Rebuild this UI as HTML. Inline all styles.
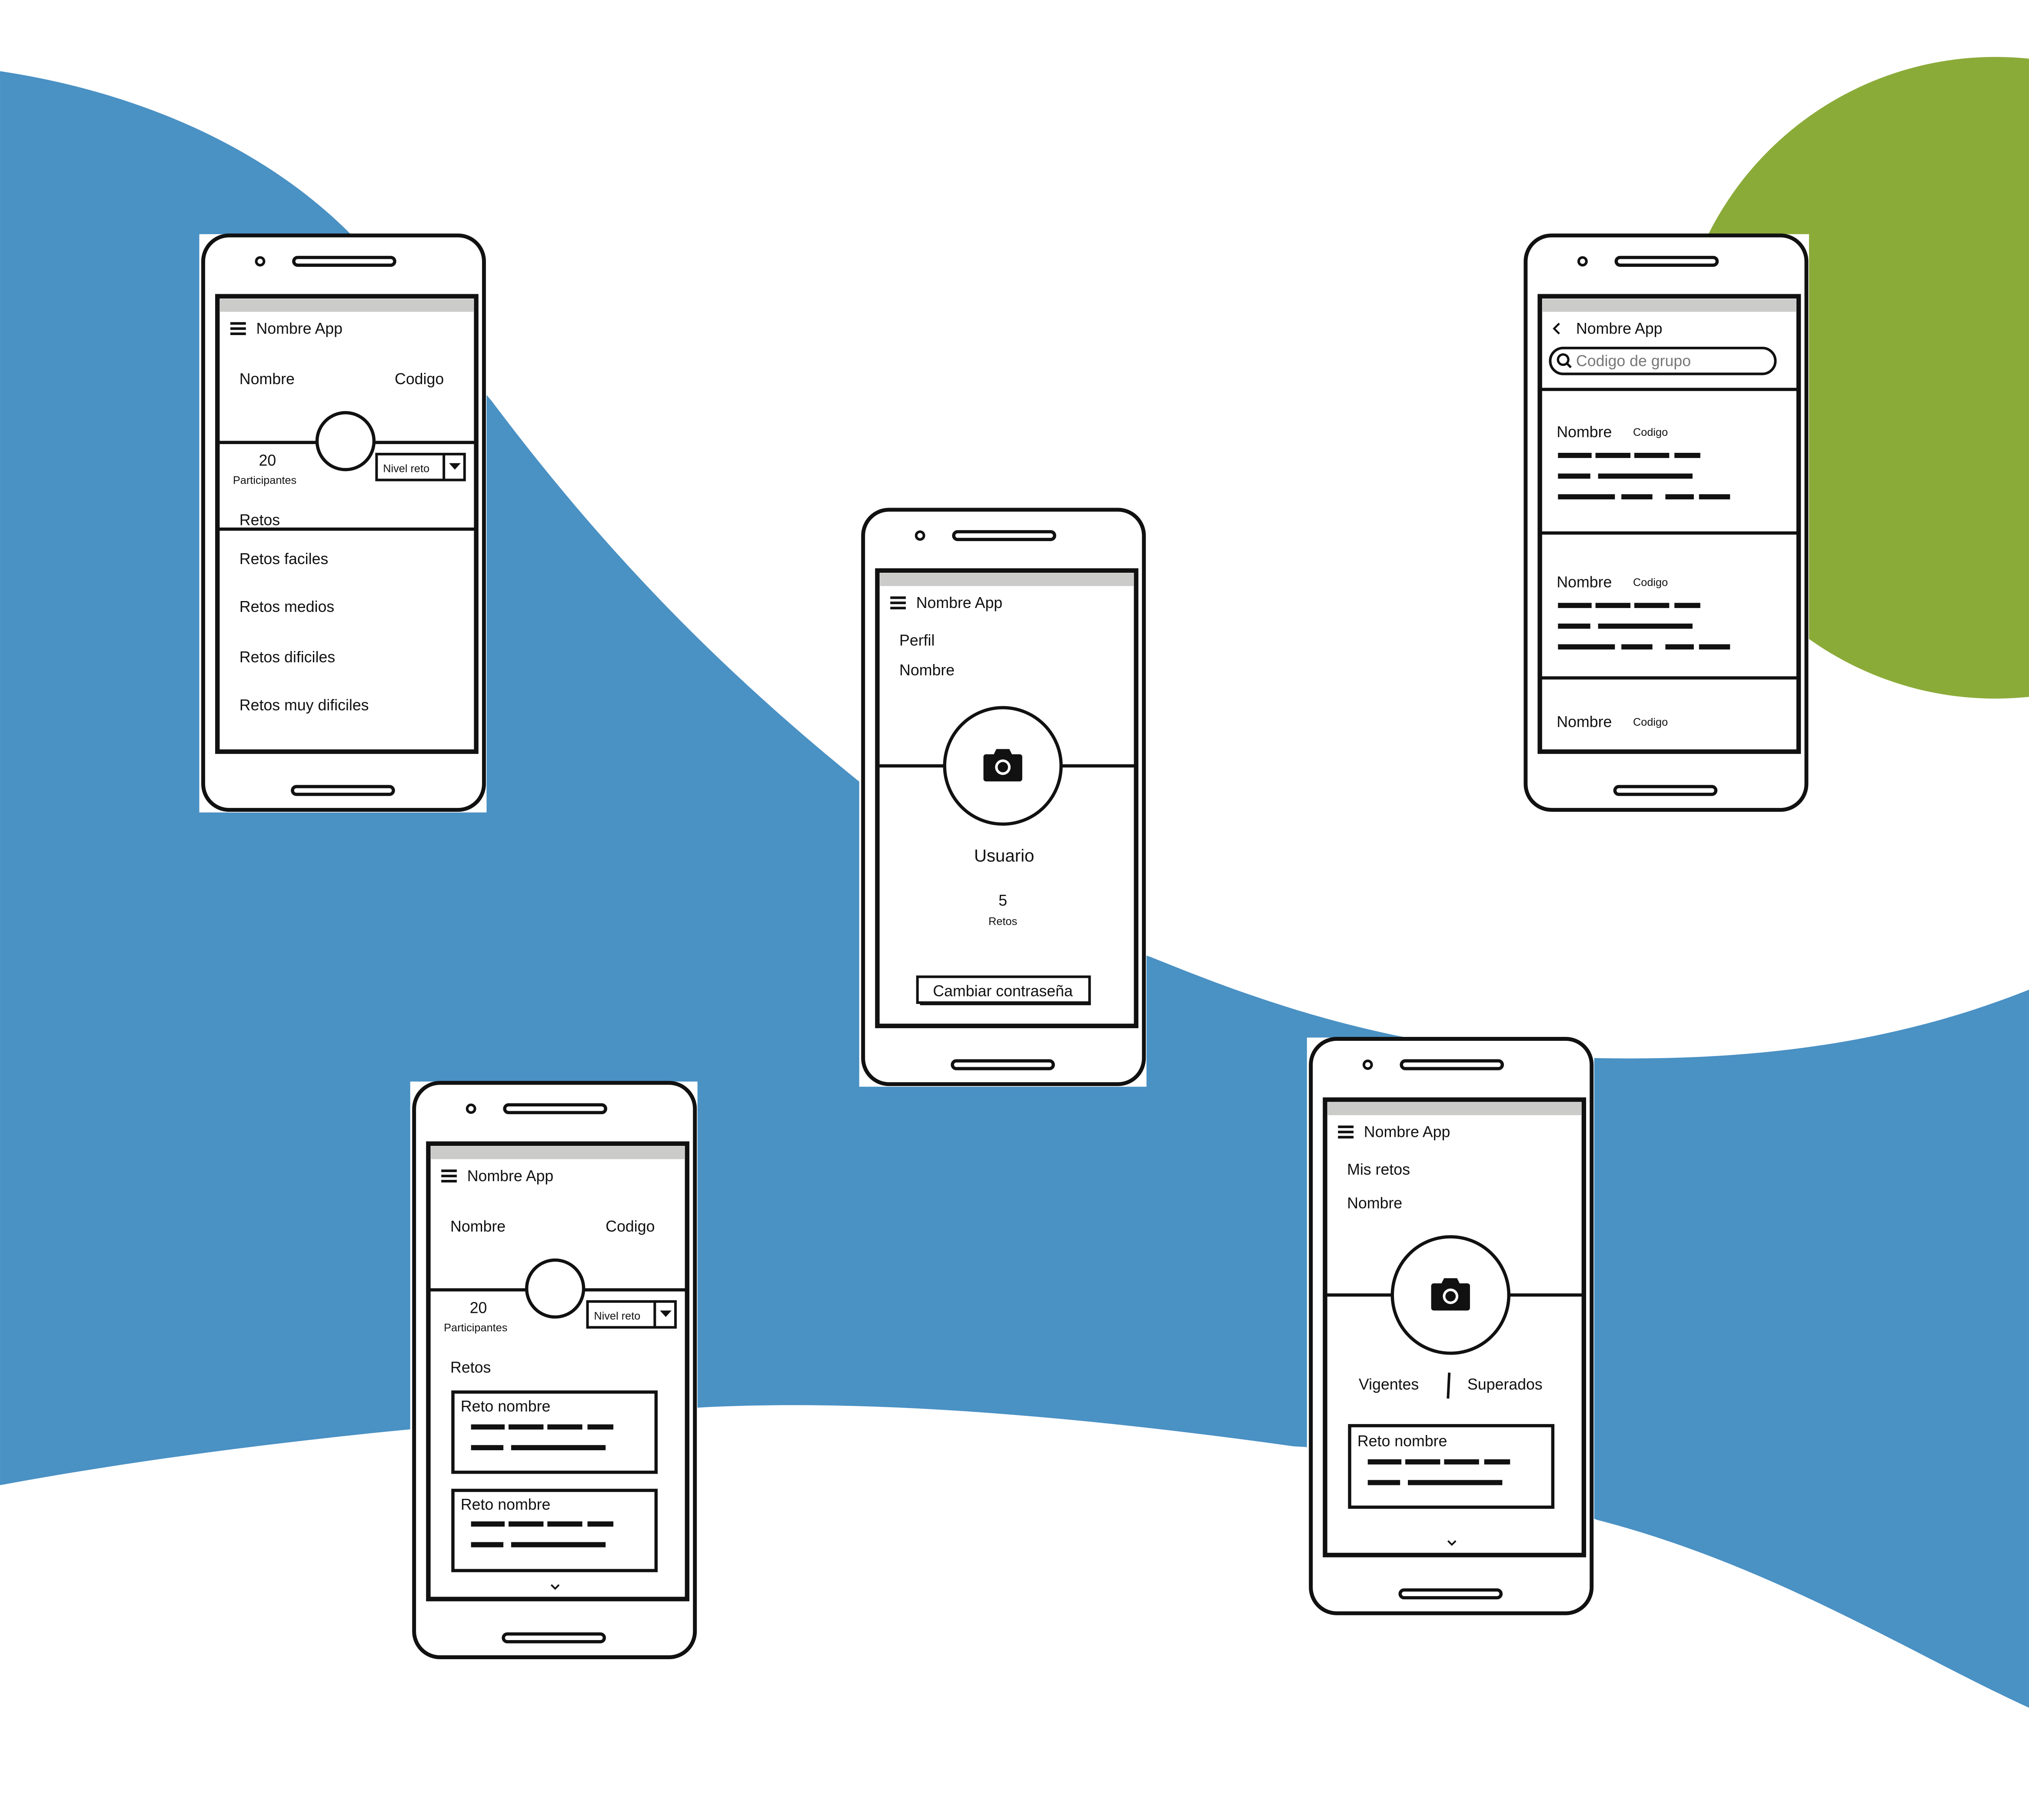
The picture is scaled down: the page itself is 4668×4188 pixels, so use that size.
<!DOCTYPE html>
<html><head><meta charset="utf-8"><style>
html,body{margin:0;padding:0;background:#fff;}
svg{display:block;}
text{font-family:"Liberation Sans",sans-serif;fill:#111;}
</style></head><body>
<svg width="4668" height="4188" viewBox="0 0 1568 1406.8" xmlns="http://www.w3.org/2000/svg">
<defs>
<g id="frame">
  <rect x="0" y="0" width="222" height="447" fill="#fff"/>
  <rect x="3" y="1" width="217" height="444" rx="20" fill="#fff" stroke="#111" stroke-width="3"/>
  <circle cx="47" cy="21" r="3" fill="none" stroke="#111" stroke-width="2"/>
  <rect x="73" y="18" width="78" height="6" rx="3" fill="none" stroke="#111" stroke-width="2.5"/>
  <rect x="72" y="427" width="78" height="6" rx="3" fill="none" stroke="#111" stroke-width="2.5"/>
  <rect x="14" y="48" width="200" height="352" fill="#fff" stroke="#111" stroke-width="3.5"/>
  <rect x="16" y="50" width="196" height="10" fill="#cbcbca"/>
</g>
<g id="ham">
  <rect x="24" y="68" width="12" height="2" fill="#111"/>
  <rect x="24" y="72" width="12" height="2" fill="#111"/>
  <rect x="24" y="76" width="12" height="2" fill="#111"/>
</g>
<g id="cam">
  <path d="M-15,-7 a2,2 0 0 1 2,-2 h6 l2,-4 h10 l2,4 h6 a2,2 0 0 1 2,2 v17 a2,2 0 0 1 -2,2 h-26 a2,2 0 0 1 -2,-2 z" fill="#111"/>
  <circle cx="0" cy="1" r="6" fill="#fff"/>
  <circle cx="0" cy="1" r="4" fill="#111"/>
</g>
<g id="dd">
  <rect x="0" y="0" width="68" height="20" fill="#fff" stroke="#111" stroke-width="2"/>
  <line x1="52" y1="0" x2="52" y2="20" stroke="#111" stroke-width="2"/>
  <path d="M56,7 h9 l-4.5,5 z" fill="#111"/>
  <text x="5" y="14" font-size="8.5">Nivel reto</text>
</g>
<g id="scr2">
  <line x1="0" y1="0" x2="122" y2="0" stroke="#111" stroke-width="4" stroke-dasharray="26 3 27 3 27 4 20 200"/>
  <line x1="0" y1="16" x2="104" y2="16" stroke="#111" stroke-width="4" stroke-dasharray="25 6 73 200"/>
</g>
</defs>

<!-- background -->
<path d="M0,55 C100,70 200,110 270,180 L380,310 C470,430 560,520 665,605 C760,680 830,720 890,740 C1000,785 1100,815 1240,818 C1380,820 1480,800 1568,765 L1568,1320 C1480,1280 1370,1210 1235,1175 C1130,1140 1050,1120 1000,1118 C800,1090 650,1082 540,1088 C350,1098 150,1120 0,1148 Z" fill="#4a91c4"/>
<circle cx="1542" cy="292" r="248" fill="#8bab39"/>

<!-- Phone 1 -->
<g transform="translate(154,181)">
  <use href="#frame"/>
  <use href="#ham"/>
  <text x="44" y="77" font-size="12">Nombre App</text>
  <text x="31" y="116" font-size="12">Nombre</text>
  <text x="151" y="116" font-size="12">Codigo</text>
  <line x1="14" y1="161" x2="214" y2="161" stroke="#111" stroke-width="2.5"/>
  <circle cx="113" cy="160" r="22" fill="#fff" stroke="#111" stroke-width="2.5"/>
  <text x="46" y="179" font-size="12">20</text>
  <text x="26" y="193" font-size="8.5">Participantes</text>
  <use href="#dd" transform="translate(137,170)"/>
  <text x="31" y="225" font-size="12">Retos</text>
  <line x1="14" y1="228" x2="214" y2="228" stroke="#111" stroke-width="2.5"/>
  <text x="31" y="255" font-size="12">Retos faciles</text>
  <text x="31" y="292" font-size="12">Retos medios</text>
  <text x="31" y="331" font-size="12">Retos dificiles</text>
  <text x="31" y="368" font-size="12">Retos muy dificiles</text>
</g>

<!-- Phone 2 -->
<g transform="translate(664,393)">
  <use href="#frame"/>
  <use href="#ham"/>
  <text x="44" y="77" font-size="12">Nombre App</text>
  <text x="31" y="106" font-size="12">Perfil</text>
  <text x="31" y="129" font-size="12">Nombre</text>
  <line x1="14" y1="199" x2="214" y2="199" stroke="#111" stroke-width="2.5"/>
  <circle cx="111" cy="199" r="45" fill="#fff" stroke="#111" stroke-width="2.5"/>
  <use href="#cam" transform="translate(111,199)"/>
  <text x="112" y="273" font-size="13.5" text-anchor="middle">Usuario</text>
  <text x="111" y="307" font-size="12" text-anchor="middle">5</text>
  <text x="111" y="322" font-size="8.5" text-anchor="middle">Retos</text>
  <rect x="45" y="362" width="133" height="20" fill="#fff" stroke="#111" stroke-width="2"/>
  <line x1="47" y1="383" x2="179" y2="383" stroke="#111" stroke-width="2"/>
  <text x="111" y="377" font-size="12" text-anchor="middle">Cambiar contraseña</text>
</g>

<!-- Phone 3 -->
<g transform="translate(1176,181)">
  <use href="#frame"/>
  <path d="M29,69 l-4,4 l4,4" fill="none" stroke="#111" stroke-width="1.5"/>
  <text x="42" y="77" font-size="12">Nombre App</text>
  <rect x="22" y="88" width="174" height="20" rx="10" fill="#fff" stroke="#111" stroke-width="2"/>
  <circle cx="32" cy="97" r="4" fill="none" stroke="#111" stroke-width="1.8"/>
  <line x1="35" y1="100" x2="38" y2="103" stroke="#111" stroke-width="1.8"/>
  <text x="42" y="102" font-size="12" fill="#777" style="fill:#777">Codigo de grupo</text>
  <line x1="14" y1="120" x2="214" y2="120" stroke="#111" stroke-width="2.5"/>
  <line x1="14" y1="231" x2="214" y2="231" stroke="#111" stroke-width="2.5"/>
  <line x1="14" y1="343" x2="214" y2="343" stroke="#111" stroke-width="2.5"/>
  <text x="27" y="157" font-size="12">Nombre</text>
  <text x="86" y="156" font-size="8.5">Codigo</text>
  <use href="#scr2" transform="translate(28,171)"/>
  <line x1="28" y1="203" x2="161" y2="203" stroke="#111" stroke-width="4" stroke-dasharray="44 5 24 10 22 4 24 200"/>
  <text x="27" y="273" font-size="12">Nombre</text>
  <text x="86" y="272" font-size="8.5">Codigo</text>
  <use href="#scr2" transform="translate(28,287)"/>
  <line x1="28" y1="319" x2="161" y2="319" stroke="#111" stroke-width="4" stroke-dasharray="44 5 24 10 22 4 24 200"/>
  <text x="27" y="381" font-size="12">Nombre</text>
  <text x="86" y="380" font-size="8.5">Codigo</text>
</g>

<!-- Phone 4 -->
<g transform="translate(317,836)">
  <use href="#frame"/>
  <use href="#ham"/>
  <text x="44" y="77" font-size="12">Nombre App</text>
  <text x="31" y="116" font-size="12">Nombre</text>
  <text x="151" y="116" font-size="12">Codigo</text>
  <line x1="14" y1="161" x2="214" y2="161" stroke="#111" stroke-width="2.5"/>
  <circle cx="112" cy="160" r="22" fill="#fff" stroke="#111" stroke-width="2.5"/>
  <text x="46" y="179" font-size="12">20</text>
  <text x="26" y="193" font-size="8.5">Participantes</text>
  <use href="#dd" transform="translate(137,170)"/>
  <text x="31" y="225" font-size="12">Retos</text>
  <rect x="33" y="240" width="157" height="62" fill="#fff" stroke="#111" stroke-width="2.5"/>
  <text x="39" y="255" font-size="12">Reto nombre</text>
  <use href="#scr2" transform="translate(47,267)"/>
  <rect x="33" y="316" width="157" height="62" fill="#fff" stroke="#111" stroke-width="2.5"/>
  <text x="39" y="331" font-size="12">Reto nombre</text>
  <use href="#scr2" transform="translate(47,342)"/>
  <path d="M109,389 l3,3 l3,-3" fill="none" stroke="#111" stroke-width="1.3"/>
</g>

<!-- Phone 5 -->
<g transform="translate(1010,802)">
  <use href="#frame"/>
  <use href="#ham"/>
  <text x="44" y="77" font-size="12">Nombre App</text>
  <text x="31" y="106" font-size="12">Mis retos</text>
  <text x="31" y="132" font-size="12">Nombre</text>
  <line x1="14" y1="199" x2="214" y2="199" stroke="#111" stroke-width="2.5"/>
  <circle cx="111" cy="199" r="45" fill="#fff" stroke="#111" stroke-width="2.5"/>
  <use href="#cam" transform="translate(111,199)"/>
  <text x="40" y="272" font-size="12">Vigentes</text>
  <path d="M110,259 l-1,20" stroke="#111" stroke-width="2"/>
  <text x="124" y="272" font-size="12">Superados</text>
  <rect x="33" y="300" width="157" height="63" fill="#fff" stroke="#111" stroke-width="2.5"/>
  <text x="39" y="316" font-size="12">Reto nombre</text>
  <use href="#scr2" transform="translate(47,328)"/>
  <path d="M109,389 l3,3 l3,-3" fill="none" stroke="#111" stroke-width="1.3"/>
</g>
</svg>
</body></html>
